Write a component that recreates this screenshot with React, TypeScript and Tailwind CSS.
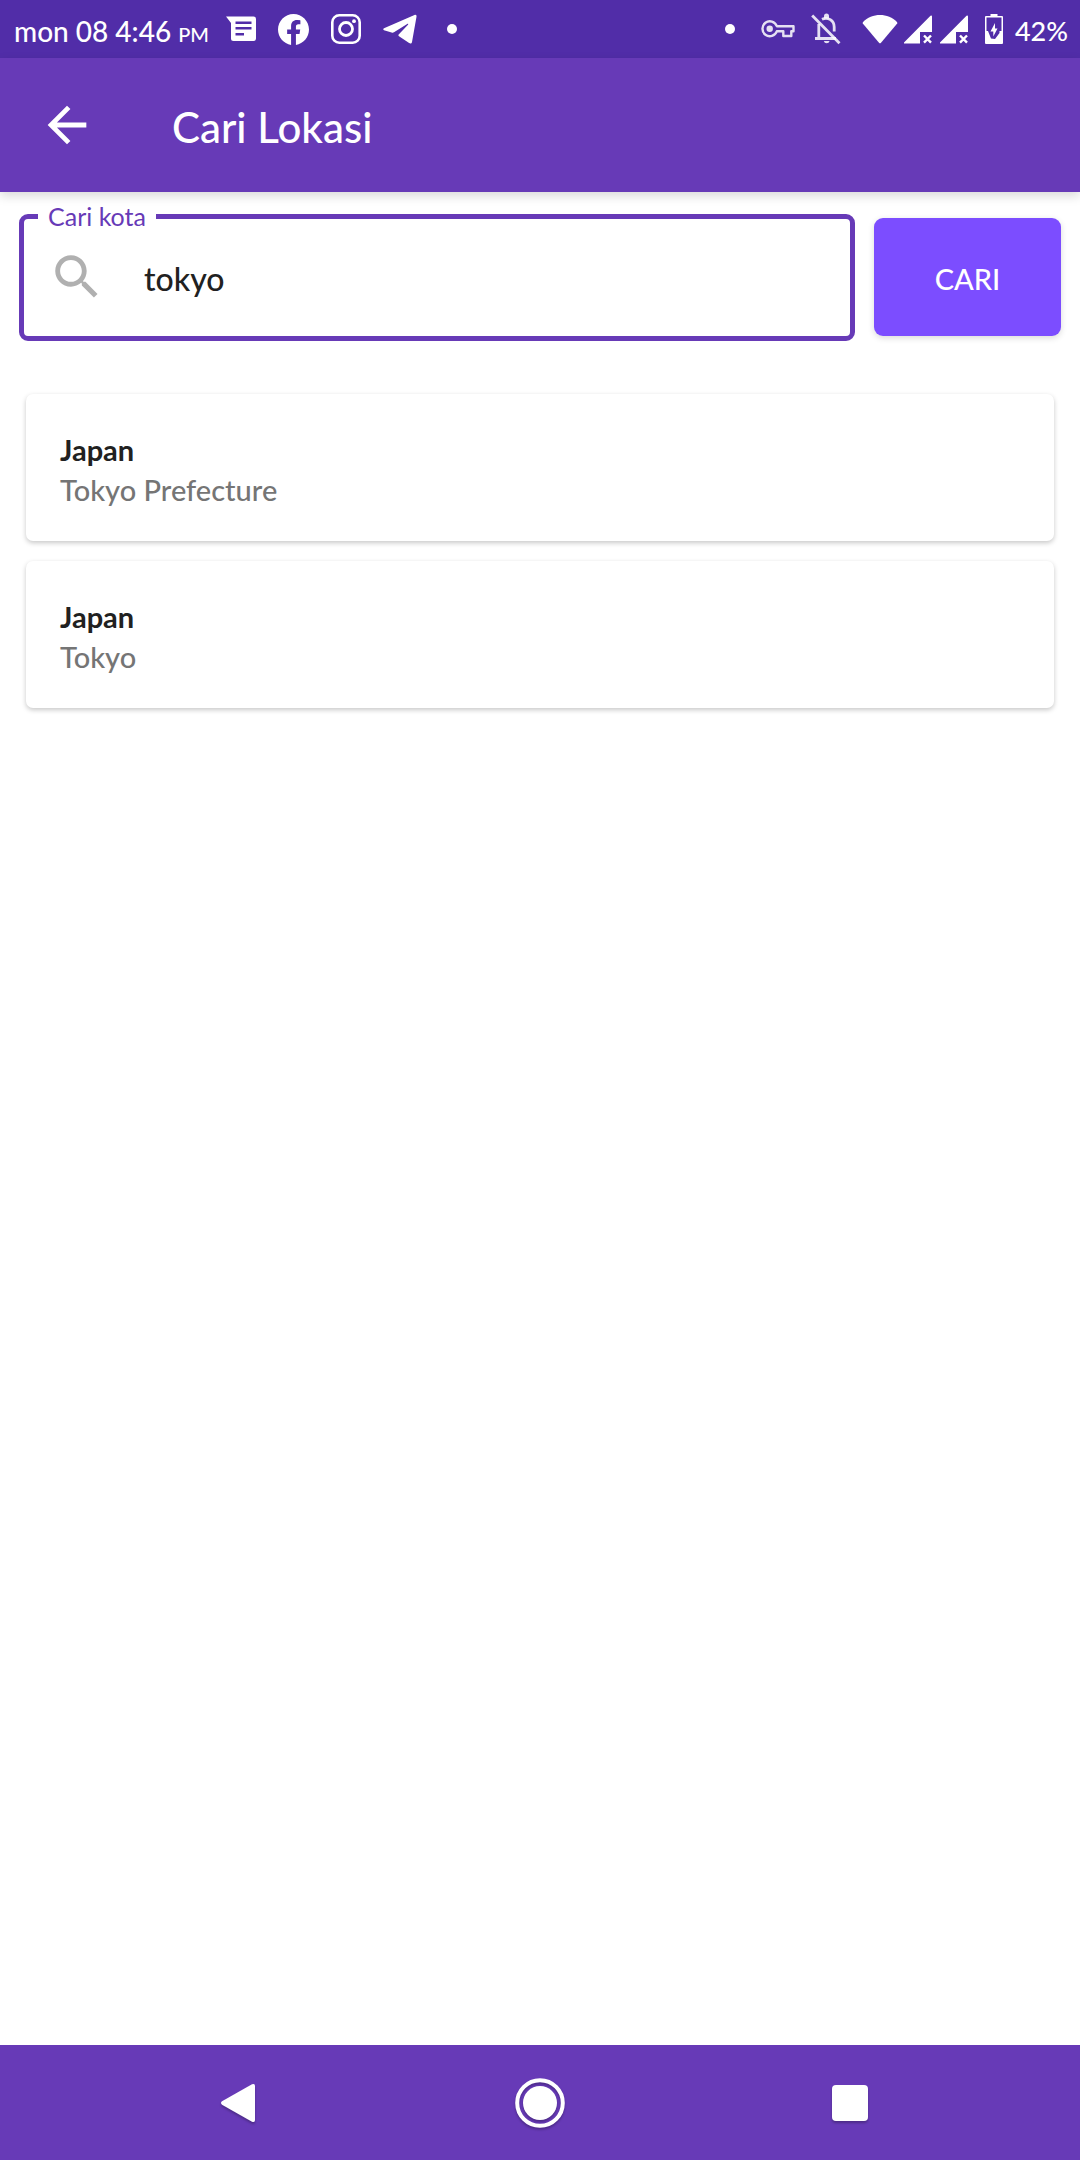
import { useState } from "react";
import type { ReactNode } from "react";

type Place = { country: string; region: string };

const places: Place[] = [
  { country: "Japan", region: "Tokyo Prefecture" },
  { country: "Japan", region: "Tokyo" },
];

function MessageIcon() {
  return (
    <svg width="30" height="26" viewBox="0 0 30 26" fill="currentColor" aria-hidden="true">
      <path
        fillRule="evenodd"
        d="M0 0.500H27.500a2.500 2.500 0 0 1 2.500 2.500V22.500a2.500 2.500 0 0 1-2.500 2.500H7.500a2.500 2.500 0 0 1-2.500-2.500V7ZM9.500 5.500V8H25.500V5.500ZM9.500 11V13.500H25.500V11ZM9.500 17V19.500H18V17Z"
      />
    </svg>
  );
}

function FacebookIcon() {
  return (
    <svg width="31" height="31" viewBox="0 0 24 24" fill="currentColor" aria-hidden="true">
      <path d="M24 12.073C24 5.446 18.627 0 12 0S0 5.446 0 12.073C0 18.100 4.388 23.094 10.125 24v-8.437H7.078v-3.490h3.047V9.413c0-3.026 1.792-4.697 4.533-4.697 1.312 0 2.686.236 2.686.236v2.971h-1.513c-1.491 0-1.956.930-1.956 1.886v2.264h3.328l-.532 3.490h-2.796V24C19.612 23.094 24 18.100 24 12.073Z" />
    </svg>
  );
}

function InstagramIcon() {
  return (
    <svg width="30" height="30" viewBox="0 0 30 30" fill="none" stroke="currentColor" aria-hidden="true">
      <rect x="1.300" y="1.300" width="27.400" height="27.400" rx="7" strokeWidth="2.600" />
      <circle cx="15" cy="15" r="6.500" strokeWidth="2.800" />
      <circle cx="23" cy="7.200" r="1.900" fill="currentColor" stroke="none" />
    </svg>
  );
}

function TelegramIcon() {
  return (
    <svg width="34" height="30" viewBox="0 0 34 30" fill="currentColor" aria-hidden="true">
      <path d="M1 14.200 31.500 1c1.400-.6 2.300.2 2 1.800L29 28c-.4 1.700-1.500 2-2.900 1.100L16 22.200c-.8-.6-.8-1.300-.1-2L25 10.800c.6-.8 0-1.300-.8-.8L11 18.300c-.8.500-1.500.6-2.400.3L1 16.200c-1-.4-1-1.500 0-2Z" />
    </svg>
  );
}

function KeyIcon() {
  return (
    <svg width="34" height="18" viewBox="0 0 34 18" fill="none" stroke="currentColor" aria-hidden="true">
      <path
        strokeWidth="2.400"
        strokeLinejoin="round"
        d="M15.800 6.200H32.500V11.300H30.300V16H22.300V11.300H15.800A7.400 7.400 0 1 1 15.800 6.200Z"
      />
      <circle cx="8.700" cy="8.800" r="3.200" fill="currentColor" stroke="none" />
    </svg>
  );
}

function BellOffIcon() {
  return (
    <svg width="30" height="32" viewBox="0 0 30 32" aria-hidden="true">
      <g fill="none" stroke="currentColor" strokeWidth="2.800">
        <path d="M7.800 11V24.500M4 25.500H25M11 6.300C17 3.500 23.200 7.500 23.200 14V18.500" />
        <path d="M1.200 2.500 28.500 30.300" />
      </g>
      <path d="M13 5.500V3a2.500 2.500 0 0 1 5 0V5.500ZM12.800 28h5.800a3 3 0 0 1-5.800 0Z" fill="currentColor" />
    </svg>
  );
}

function WifiIcon() {
  return (
    <svg width="36" height="30" viewBox="0 0 36 30" fill="currentColor" aria-hidden="true">
      <path d="M0.800 8.200C10 -1.300 26 -1.300 35.200 8.200V9.500L18.800 29q-.8.700-1.600 0L0.800 9.500Z" />
    </svg>
  );
}

function SignalIcon() {
  return (
    <svg width="28" height="29" viewBox="0 0 28 29" aria-hidden="true">
      <path d="M0 27.500V28.500H16V17H28V1.500Q28 .2 26.500 .8Z" fill="currentColor" />
      <path d="M20 20.500 27 27.700M27 20.500 20 27.700" stroke="currentColor" strokeWidth="2.400" />
    </svg>
  );
}

function BatteryIcon() {
  return (
    <svg width="18" height="30" viewBox="0 0 18 30" aria-hidden="true">
      <path
        fill="currentColor"
        fillRule="evenodd"
        d="M5.500 0h7V2H17a1 1 0 0 1 1 1V29a1 1 0 0 1-1 1H1a1 1 0 0 1-1-1V3A1 1 0 0 1 1 2H5.500ZM1.500 3.500V17H3L6 24.500 10 25 14.500 19V17H16.500V3.500Z"
      />
      <path d="M10 9 5.500 17.500H8.300V22.500L12.500 14.500H10Z" fill="currentColor" />
    </svg>
  );
}

function Dot() {
  return <span className="block size-2.5 rounded-full bg-white" />;
}

function StatusBar() {
  return (
    <div className="flex h-[58px] items-center justify-between bg-[#512da8] pr-3 pl-3.5 text-white">
      <div className="flex items-center">
        <p className="mr-[17px] pt-1 text-[28px] leading-8 font-medium whitespace-nowrap">
          mon 08 4:46 <span className="text-xl">PM</span>
        </p>
        <div className="flex items-center gap-[22px]">
          <MessageIcon />
          <FacebookIcon />
          <InstagramIcon />
          <TelegramIcon />
          <div className="pl-2">
            <Dot />
          </div>
        </div>
      </div>
      <div className="flex items-center">
        <Dot />
        <div className="ml-[26px] flex items-center gap-4 text-white/85">
          <KeyIcon />
          <BellOffIcon />
        </div>
        <div className="ml-[21px] flex items-center gap-1.5">
          <WifiIcon />
          <div className="flex gap-2">
            <SignalIcon />
            <SignalIcon />
          </div>
        </div>
        <div className="ml-[17px] flex items-center gap-3">
          <BatteryIcon />
          <span className="pt-1 text-[27px] leading-8 font-medium">42%</span>
        </div>
      </div>
    </div>
  );
}

function AppBar() {
  return (
    <header className="relative flex h-[134px] items-center gap-[76px] bg-[#673ab7] pl-[38px] text-white shadow-[0_4px_10px_rgba(0,0,0,0.15)]">
      <button type="button" aria-label="Kembali" className="size-[58px]">
        <svg viewBox="0 0 24 24" fill="currentColor" className="size-full" aria-hidden="true">
          <path d="M20 11H7.830l5.590-5.590L12 4l-8 8 8 8 1.410-1.410L7.830 13H20v-2z" />
        </svg>
      </button>
      <h1 className="pt-1 text-[42px] leading-[52px] font-medium">Cari Lokasi</h1>
    </header>
  );
}

function SearchForm() {
  const [query, setQuery] = useState("tokyo");
  return (
    <form className="flex items-end gap-[19px] px-[19px] pt-3" onSubmit={(e) => e.preventDefault()}>
      <fieldset className="min-w-0 flex-1 rounded-[9px] border-[5px] border-[#673ab7] pl-6">
        <legend className="-ml-2.5 px-2.5 text-[25px] leading-6 text-[#673ab7]">
          <label htmlFor="city">Cari kota</label>
        </legend>
        <div className="flex h-[108px] items-center gap-[38px] pb-2.5">
          <svg viewBox="0 0 24 24" fill="#b0b0b0" className="size-[58px] shrink-0" aria-hidden="true">
            <path d="M15.500 14h-.790l-.280-.270C15.410 12.590 16 11.110 16 9.500 16 5.910 13.090 3 9.500 3S3 5.910 3 9.500 5.910 16 9.500 16c1.610 0 3.090-.590 4.230-1.570l.270.280v.790l5 4.990L20.490 19l-4.990-5zm-6 0C7.010 14 5 11.990 5 9.500S7.010 5 9.500 5 14 7.010 14 9.500 11.990 14 9.500 14z" />
          </svg>
          <input
            id="city"
            type="text"
            value={query}
            onChange={(e) => setQuery(e.target.value)}
            className="min-w-0 flex-1 bg-transparent pt-1 text-[32px] leading-10 font-medium text-[#212121] outline-none"
          />
        </div>
      </fieldset>
      <button
        type="submit"
        className="mb-[5px] h-[118px] w-[187px] rounded-[9px] bg-[#7c4dff] pt-1 text-[29px] leading-9 font-medium text-white shadow-[0_2px_6px_rgba(0,0,0,0.15)]"
      >
        CARI
      </button>
    </form>
  );
}

function PlaceCard({ place }: { place: Place }) {
  return (
    <li className="rounded-[7px] bg-white px-[34px] pt-9 pb-[31px] shadow-[0_2px_5px_rgba(0,0,0,0.22)]">
      <h2 className="text-[29px] leading-10 font-bold text-[#212121]">{place.country}</h2>
      <p className="text-[29px] leading-10 font-medium text-[#757575]">{place.region}</p>
    </li>
  );
}

function NavButton({ label, children }: { label: string; children: ReactNode }) {
  return (
    <button type="button" aria-label={label} className="flex h-full w-28 items-center justify-center drop-shadow-[0_2px_1px_rgba(0,0,0,0.25)]">
      {children}
    </button>
  );
}

function NavigationBar() {
  return (
    <nav className="flex h-[115px] items-center justify-center gap-[198px] bg-[#673ab7] text-white">
      <NavButton label="Kembali">
        <svg width="36" height="40" viewBox="0 0 36 40" fill="currentColor" className="ml-4" aria-hidden="true">
          <path d="M2 18.300 32 1.300Q35 0 35 3V37Q35 40 32 38.700L2 21.700Q0 20 2 18.300Z" />
        </svg>
      </NavButton>
      <NavButton label="Beranda">
        <svg width="50" height="50" viewBox="0 0 50 50" aria-hidden="true">
          <circle cx="25" cy="25" r="22.800" fill="none" stroke="currentColor" strokeWidth="4" />
          <circle cx="25" cy="25" r="17" fill="currentColor" />
        </svg>
      </NavButton>
      <NavButton label="Aplikasi terbaru">
        <span className="size-9 rounded-[4px] bg-white" />
      </NavButton>
    </nav>
  );
}

export default function App() {
  return (
    <div className="flex min-h-screen flex-col bg-white font-['Lato',sans-serif]">
      <StatusBar />
      <AppBar />
      <main className="flex-1">
        <SearchForm />
        <ul className="mt-[53px] flex flex-col gap-5 px-[26px]">
          {places.map((place) => (
            <PlaceCard key={place.region} place={place} />
          ))}
        </ul>
      </main>
      <NavigationBar />
    </div>
  );
}
